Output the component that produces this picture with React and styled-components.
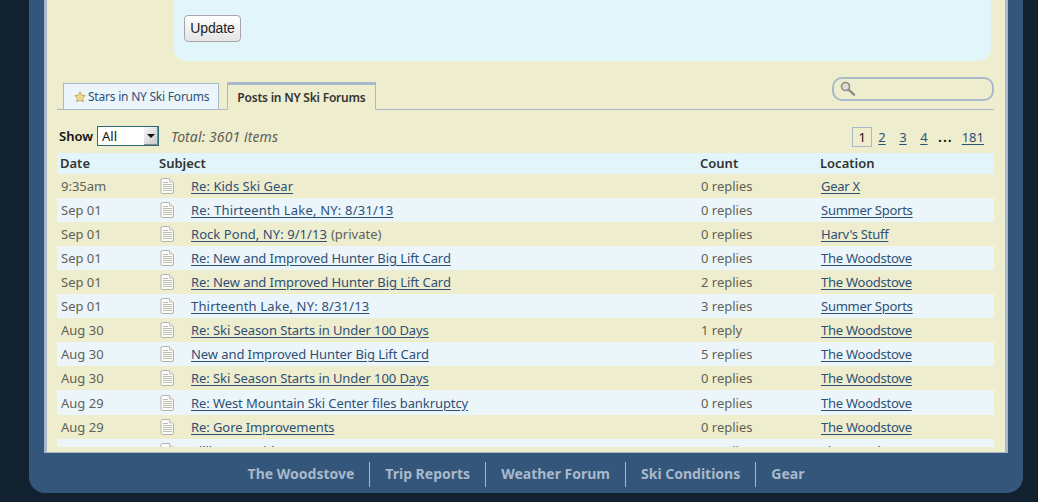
import React from "react"
import styled, {createGlobalStyle} from "styled-components"

const ink = "#5f6159"
const link = "#2d5077"
const beige = "#eeedcd"

const GlobalStyle = createGlobalStyle`
  html, body {
    margin: 0;
    height: 502px;
    overflow: hidden;
    background: #12212f;
    font-family: "Noto Sans", "Liberation Sans", sans-serif;
    font-size: 13px;
  }
`
const Frame = styled.div`
  box-sizing: border-box;
  width: 994px;
  height: 493px;
  margin-left: 29px;
  padding: 0 15px;
  display: flex;
  flex-direction: column;
  background: #34567a;
  border-radius: 0 0 16px 16px;
`
const Inner = styled.div`
  box-sizing: border-box;
  height: 453px;
  padding-right: 11px;
  padding-left: 10px;
  border-left: 3px solid #a9b9cc;
  border-right: 3px solid #a9b9cc;
  border-bottom: 1px solid #a9b9cc;
  background: ${beige};
`
const Panel = styled.div`
  box-sizing: border-box;
  height: 61px;
  margin-left: 117px;
  margin-right: 3px;
  padding: 15px 10px 0;
  background: #e2f5fa;
  border-radius: 0 0 12px 12px;
`
const UpdateButton = styled.button`
  box-sizing: border-box;
  display: block;
  width: 57px;
  height: 27px;
  padding: 0 0 2px;
  border: 1px solid #a6a6a6;
  border-radius: 4px;
  background: linear-gradient(#ffffff, #e4e4e4);
  color: #222;
  font-family: "Liberation Sans", sans-serif;
  font-size: 14px;
  letter-spacing: -0.1px;
`
const TabBar = styled.div`
  box-sizing: border-box;
  height: 49px;
  padding: 0 0 0 6px;
  display: flex;
  align-items: flex-end;
  gap: 8px;
  border-bottom: 1px solid #a9b9cc;
`
const Tab = styled.div`
  box-sizing: border-box;
  height: ${props => (props.$active ? 28 : 27)}px;
  padding: 0 9px 0 ${props => (props.$active ? 9 : 10)}px;
  display: flex;
  align-items: center;
  gap: 2px;
  margin-bottom: -1px;
  border: 1px solid #a9b9cc;
  border-top-width: ${props => (props.$active ? 3 : 1)}px;
  border-bottom: ${props => (props.$active ? `1px solid ${beige}` : "1px solid #a9b9cc")};
  background: ${props => (props.$active ? beige : "#ecf6fa")};
  color: ${props => (props.$active ? "#333" : link)};
  font-size: 12px;
  font-weight: ${props => (props.$active ? 600 : 400)};
  letter-spacing: -0.22px;
  white-space: nowrap;
`
const SearchBox = styled.div`
  box-sizing: border-box;
  position: absolute;
  top: 77px;
  left: 832px;
  width: 162px;
  height: 24px;
  padding-left: 6px;
  display: flex;
  align-items: center;
  border: 2px solid #a9b9cc;
  border-radius: 10px;
`
const Toolbar = styled.div`
  height: 43px;
  display: flex;
  align-items: center;
  justify-content: space-between;
  padding-top: 9px;
  box-sizing: border-box;
`
const ShowGroup = styled.div`
  display: flex;
  align-items: center;
  padding-left: 2px;
`
const ShowLabel = styled.span`
  font-weight: 600;
  color: #111;
  margin-right: 4px;
`
const SelectBox = styled.div`
  box-sizing: border-box;
  position: relative;
  width: 62px;
  height: 20px;
  border: 1px solid #2b6a78;
  background: #fff;
`
const NativeSelect = styled.select`
  appearance: none;
  width: 100%;
  height: 100%;
  border: 0;
  padding: 0 0 0 4px;
  background: transparent;
  font: inherit;
  color: #111;
`
const SelectArrow = styled.span`
  position: absolute;
  top: 0;
  right: 0;
  width: 14px;
  height: 18px;
  background: linear-gradient(135deg, #f8f8f8, #c9c9c9);
  border-right: 1px solid #888;
  border-bottom: 1px solid #888;
  box-sizing: border-box;
  &::after {
    content: "";
    position: absolute;
    top: 7px;
    left: 3px;
    border: 4px solid transparent;
    border-top: 4px solid #111;
    border-bottom: 0;
  }
`
const Total = styled.span`
  margin-left: 12px;
  font-size: 14px;
  letter-spacing: 0.1px;
  font-style: italic;
  color: ${ink};
`
const Pager = styled.div`
  display: flex;
  align-items: center;
  padding: 1px 10px 0 0;
`
const PageCurrent = styled.span`
  box-sizing: border-box;
  width: 20px;
  height: 20px;
  margin-right: 6px;
  display: flex;
  align-items: center;
  justify-content: center;
  border: 1px solid #a9b9cc;
  color: #221111;
`
const PageLink = styled.a`
  margin-right: 13.5px;
  color: ${link};
  text-decoration: underline;
  text-underline-offset: 2px;
  &:last-child {
    margin-right: 0;
  }
`
const PageGap = styled.span`
  margin: 0 9px 0 -3px;
  color: #111;
  font-size: 14px;
  font-weight: 600;
  letter-spacing: 1px;
`
const TableClip = styled.div`
  height: 294px;
  overflow: hidden;
`
const Table = styled.table`
  width: 100%;
  border-collapse: collapse;
  table-layout: fixed;
`
const HeadCell = styled.th`
  box-sizing: border-box;
  height: 21px;
  padding: 0 0 2px 3px;
  text-align: left;
  font-weight: 600;
  color: #333;
  background: #e2f5fa;
  width: ${props => props.$w}px;
`
const Row = styled.tr`
  height: ${props => (props.$tall ? 25 : 24)}px;
  background: ${props => (props.$alt ? "#ecf6fa" : beige)};
`
const Cell = styled.td`
  padding: 0 0 0 4px;
  color: ${ink};
  white-space: nowrap;
`
const SubjectWrap = styled.div`
  display: flex;
  align-items: center;
  gap: 16px;
`
const RowLink = styled.a`
  color: ${link};
  letter-spacing: ${props => props.$spacing ?? -0.08}px;
  text-decoration: underline;
  text-underline-offset: 2px;
`
const LocationLink = styled(RowLink)`
  letter-spacing: -0.25px;
`
const Note = styled.span`
  margin-left: 4px;
`
const Footer = styled.nav`
  flex: 1;
  display: flex;
  align-items: flex-start;
  justify-content: center;
  padding-top: 9px;
  box-sizing: border-box;
`
const FooterLink = styled.a`
  box-sizing: border-box;
  height: 25px;
  padding: 0 15px 2px;
  display: flex;
  align-items: center;
  color: #a9b9cc;
  font-size: 14px;
  font-weight: 700;
  border-left: ${props => (props.$first ? "0" : "1px solid #a9b9cc")};
`

const DocIcon = () => (
  <svg width="15" height="16" viewBox="0 0 15 16" style={{display: "block", flex: "none"}}>
    <path d="M2.5.5h7l4 4v9.5a1.5 1.5 0 0 1-1.5 1.5h-9.5a1.5 1.5 0 0 1-1.5-1.5v-12a1.5 1.5 0 0 1 1.5-1.5z" fill="#fcfcf8" stroke="#b2b2aa" />
    <path d="M9.5.5v3.5h4" fill="#ecece6" stroke="#c2c2ba" />
    <path d="M3 4.5h5M3 6.5h9M3 8.5h9M3 10.5h9M3 12.5h9" stroke="#bcbcb6" />
  </svg>
)
const StarIcon = () => (
  <svg width="12" height="12" viewBox="0 0 24 24">
    <path d="M12 1.5l3.2 7 7.3.8-5.4 5 1.5 7.6L12 18l-6.6 3.9 1.5-7.6-5.4-5 7.3-.8z" fill="#f1dc8c" stroke="#c4ab60" strokeWidth="2" />
  </svg>
)
const SearchIcon = () => (
  <svg width="16" height="16" viewBox="0 0 16 16">
    <circle cx="5.5" cy="5.5" r="4" fill="#dcdcd0" stroke="#8f8f8a" strokeWidth="1.6" />
    <path d="M8.6 8.6l5.4 5" stroke="#8f8f8a" strokeWidth="2.6" strokeLinecap="round" />
  </svg>
)

const rows = [
  {date: "9:35am", subject: "Re: Kids Ski Gear", count: "0 replies", place: "Gear X", spacing: 0.03},
  {date: "Sep 01", subject: "Re: Thirteenth Lake, NY: 8/31/13", count: "0 replies", place: "Summer Sports", spacing: 0.2},
  {date: "Sep 01", subject: "Rock Pond, NY: 9/1/13", count: "0 replies", place: "Harv's Stuff", isPrivate: true, spacing: 0.06},
  {date: "Sep 01", subject: "Re: New and Improved Hunter Big Lift Card", count: "0 replies", place: "The Woodstove"},
  {date: "Sep 01", subject: "Re: New and Improved Hunter Big Lift Card", count: "2 replies", place: "The Woodstove"},
  {date: "Sep 01", subject: "Thirteenth Lake, NY: 8/31/13", count: "3 replies", place: "Summer Sports", spacing: 0.17},
  {date: "Aug 30", subject: "Re: Ski Season Starts in Under 100 Days", count: "1 reply", place: "The Woodstove"},
  {date: "Aug 30", subject: "New and Improved Hunter Big Lift Card", count: "5 replies", place: "The Woodstove"},
  {date: "Aug 30", subject: "Re: Ski Season Starts in Under 100 Days", count: "0 replies", place: "The Woodstove"},
  {date: "Aug 29", subject: "Re: West Mountain Ski Center files bankruptcy", count: "0 replies", place: "The Woodstove", tall: true},
  {date: "Aug 29", subject: "Re: Gore Improvements", count: "0 replies", place: "The Woodstove"},
  {date: "Aug 27", subject: "Killington Mid", count: "0 replies", place: "The Woodstove"},
]
const footerLinks = ["The Woodstove", "Trip Reports", "Weather Forum", "Ski Conditions", "Gear"]

export default function App() {
  return (
    <>
      <GlobalStyle />
      <Frame>
        <Inner>
          <Panel>
            <UpdateButton>Update</UpdateButton>
          </Panel>
          <TabBar>
            <Tab><StarIcon />Stars in NY Ski Forums</Tab>
            <Tab $active>Posts in NY Ski Forums</Tab>
          </TabBar>
          <SearchBox><SearchIcon /></SearchBox>
          <Toolbar>
            <ShowGroup>
              <ShowLabel>Show</ShowLabel>
              <SelectBox>
                <NativeSelect defaultValue="All"><option>All</option></NativeSelect>
                <SelectArrow />
              </SelectBox>
              <Total>Total: 3601 items</Total>
            </ShowGroup>
            <Pager>
              <PageCurrent>1</PageCurrent>
              <PageLink>2</PageLink>
              <PageLink>3</PageLink>
              <PageLink>4</PageLink>
              <PageGap>...</PageGap>
              <PageLink>181</PageLink>
            </Pager>
          </Toolbar>
          <TableClip>
            <Table>
              <thead>
                <tr>
                  <HeadCell $w={99}>Date</HeadCell>
                  <HeadCell $w={541}>Subject</HeadCell>
                  <HeadCell $w={120}>Count</HeadCell>
                  <HeadCell>Location</HeadCell>
                </tr>
              </thead>
              <tbody>
                {rows.map((r, i) => (
                  <Row key={i} $alt={i % 2 === 1} $tall={r.tall}>
                    <Cell>{r.date}</Cell>
                    <Cell>
                      <SubjectWrap>
                        <DocIcon />
                        <span>
                          <RowLink $spacing={r.spacing}>{r.subject}</RowLink>
                          {r.isPrivate && <Note>(private)</Note>}
                        </span>
                      </SubjectWrap>
                    </Cell>
                    <Cell>{r.count}</Cell>
                    <Cell><LocationLink>{r.place}</LocationLink></Cell>
                  </Row>
                ))}
              </tbody>
            </Table>
          </TableClip>
        </Inner>
        <Footer>
          {footerLinks.map((name, i) => (
            <FooterLink key={name} $first={i === 0}>{name}</FooterLink>
          ))}
        </Footer>
      </Frame>
    </>
  )
}
